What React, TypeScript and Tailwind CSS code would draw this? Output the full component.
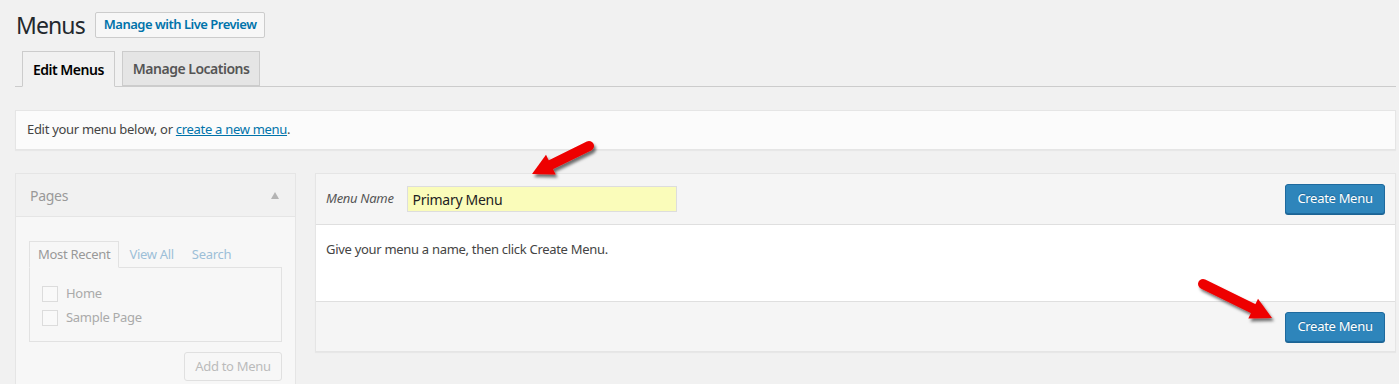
import React from 'react';

type Pt = [number, number];

// red pointer arrow drawn from tail to tip
function Arrow({ tail, tip }: { tail: Pt; tip: Pt }) {
  const dx = tip[0] - tail[0];
  const dy = tip[1] - tail[1];
  const len = Math.hypot(dx, dy);
  const ux = dx / len;
  const uy = dy / len;
  const px = -uy;
  const py = ux;
  const headLen = 21;
  const headHalf = 11;
  const base: Pt = [tip[0] - ux * headLen, tip[1] - uy * headLen];
  const head = [
    tip,
    [base[0] + px * headHalf, base[1] + py * headHalf],
    [base[0] - px * headHalf, base[1] - py * headHalf],
  ]
    .map((p) => p.join(','))
    .join(' ');
  return (
    <g filter="url(#arrowShadow)">
      <line
        x1={tail[0]}
        y1={tail[1]}
        x2={base[0] + ux * 2}
        y2={base[1] + uy * 2}
        stroke="#ee0000"
        strokeWidth={10}
        strokeLinecap="round"
      />
      <polygon points={head} fill="#ee0000" />
    </g>
  );
}

function PrimaryButton({ children }: { children: React.ReactNode }) {
  return (
    <button className="h-[30px] w-[100px] rounded-[3px] border border-[#1e6a9e] bg-[#2e85bb] text-[13px] text-white shadow-[0_1px_0_#1c6494] [text-shadow:0_-1px_1px_#1d6897]">
      {children}
    </button>
  );
}

export default function App() {
  return (
    <div className="relative min-h-screen overflow-hidden bg-[#f1f1f1] font-['Noto_Sans','Open_Sans',sans-serif] text-[13px] tracking-[-0.3px] text-[#444]">
      <div className="pl-[15px] pr-[3px] pt-[12px]">
        {/* Header */}
        <div className="flex items-center">
          <h1 className="ml-[1px] text-[23px] leading-[25px] tracking-[-0.9px] text-[#23282d]">Menus</h1>
          <button className="ml-[10px] h-[26px] rounded-[2px] border border-[#cccccc] bg-[#f7f7f7] px-[8px] text-[13px] font-semibold tracking-[-0.5px] text-[#0073aa]">
            Manage with Live Preview
          </button>
        </div>

        {/* Tabs */}
        <div className="mt-[13px] flex gap-[7px] border-b border-[#cccccc] pl-[7px] text-[14px] font-semibold tracking-[-0.5px]">
          <div className="-mb-px flex h-[36px] items-center border border-[#cccccc] border-b-[#f1f1f1] bg-[#f1f1f1] px-[10px] text-black">
            Edit Menus
          </div>
          <div className="-mb-px flex h-[35px] items-center border border-[#cccccc] bg-[#e5e5e5] px-[10px] text-[#555]">
            Manage Locations
          </div>
        </div>

        {/* Notice */}
        <div className="mt-[23px] flex h-[40px] items-center border border-[#e5e5e5] bg-[#fbfbfb] px-[11px] shadow-[0_1px_1px_rgba(0,0,0,0.04)]">
          <span>
            Edit your menu below, or{' '}
            <a className="text-[#0073aa] underline">create a new menu</a>.
          </span>
        </div>

        {/* Main */}
        <div className="mt-[23px] flex items-start gap-[19px]">
          {/* Sidebar */}
          <div className="w-[281px] border border-[#e5e5e5] bg-[#f7f7f7]">
            <div className="flex h-[43px] items-center justify-between border-b border-[#e5e5e5] bg-[#f1f1f1] pl-[14px] pr-[16px]">
              <span className="text-[14px] text-[#999]">Pages</span>
              <span className="h-0 w-0 border-x-[4px] border-b-[7px] border-x-transparent border-b-[#b4b4b4]" />
            </div>
            <div className="px-[13px] pt-[24px] pb-[6px]">
              <div className="flex items-end">
                <div className="-mb-px flex h-[27px] items-center border border-[#e2e2e2] border-b-[#f7f7f7] bg-[#f7f7f7] px-[8px] text-[#999]">
                  Most Recent
                </div>
                <span className="ml-[10px] pb-[3px] text-[#9dbfd8]">View All</span>
                <span className="ml-[18px] pb-[3px] text-[#9dbfd8]">Search</span>
              </div>
              <div className="flex h-[75px] flex-col gap-[4px] border border-[#e2e2e2] px-[12px] pt-[16px]">
                <label className="flex h-[20px] items-center gap-[8px] text-[#aaa]">
                  <span className="h-[16px] w-[16px] border border-[#dcdcdc] bg-[#f9f9f9]" />
                  Home
                </label>
                <label className="flex h-[20px] items-center gap-[8px] text-[#aaa]">
                  <span className="h-[16px] w-[16px] border border-[#dcdcdc] bg-[#f9f9f9]" />
                  Sample Page
                </label>
              </div>
              <div className="mt-[10px] flex justify-end">
                <button className="h-[29px] w-[98px] rounded-[3px] border border-[#e0e0e0] bg-[#f7f7f7] text-[#bbb]">
                  Add to Menu
                </button>
              </div>
            </div>
          </div>

          {/* Menu editor */}
          <div className="flex-1 border border-[#e5e5e5] bg-white shadow-[0_1px_1px_rgba(0,0,0,0.04)]">
            <div className="flex h-[51px] items-center border-b border-[#dfdfdf] bg-[#f5f5f5] pl-[10px] pr-[10px]">
              <label className="italic text-[#555]">Menu Name</label>
              <div className="ml-[13px] flex h-[26px] w-[270px] items-center border border-[#dddddd] bg-[#fafcba] px-[5px] text-[14px] text-[#222]">
                Primary Menu
              </div>
              <div className="ml-auto">
                <PrimaryButton>Create Menu</PrimaryButton>
              </div>
            </div>
            <div className="h-[76px] px-[10px] pt-[15px] text-[#444]">
              Give your menu a name, then click Create Menu.
            </div>
            <div className="flex h-[50px] items-center justify-end border-t border-[#dfdfdf] bg-[#f5f5f5] pr-[10px]">
              <PrimaryButton>Create Menu</PrimaryButton>
            </div>
          </div>
        </div>
      </div>

      {/* Annotation arrows */}
      <svg className="pointer-events-none absolute inset-0 h-full w-full">
        <defs>
          <filter id="arrowShadow" x="-20%" y="-20%" width="150%" height="150%">
            <feDropShadow dx="2" dy="3" stdDeviation="1.5" floodColor="#000" floodOpacity="0.55" />
          </filter>
        </defs>
        <Arrow tail={[589, 146]} tip={[532, 174]} />
        <Arrow tail={[1203, 284]} tip={[1272, 318]} />
      </svg>
    </div>
  );
}
